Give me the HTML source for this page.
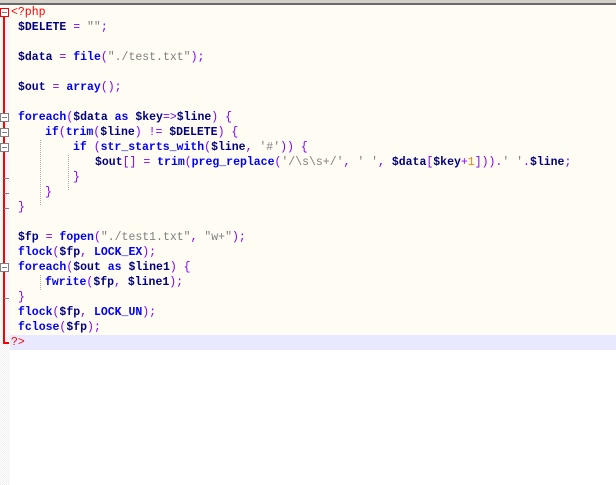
<!DOCTYPE html>
<html><head><meta charset="utf-8"><style>
*{margin:0;padding:0}
body{width:616px;height:485px;overflow:hidden;background:#fff;position:relative;font-family:"Liberation Mono",monospace;font-size:11.5px}
#top{position:absolute;left:0;top:0;width:616px;height:3px;background:#d4d0c8}
#top2{position:absolute;left:0;top:3px;width:616px;height:2px;background:#6a6a6a}
#gut{position:absolute;left:0;top:5px;width:10px;height:480px;background:repeating-conic-gradient(#f0f0f0 0 25%,#fff 0 50%) 0 0/2px 2px}
#code{position:absolute;left:10px;top:5px;width:606px;height:330px;background:#fffcf3}
#cur{position:absolute;left:10px;top:335px;width:606px;height:15px;background:#e8e8ff}
.l{position:absolute;height:15px;line-height:15px;white-space:pre;color:#000080;font-weight:bold}
.k{color:#0000ff}.o{color:#8000ff;font-weight:normal}.s{color:#808080;font-weight:normal}.n{color:#ff8000;font-weight:normal}.r{color:#ff0000;font-weight:normal}
.vl{position:absolute;width:3px;background:#f00;left:3px}
.bx{position:absolute;left:0;width:7px;height:7px;border:1px solid #808080;background:#fff}
.bx:after{content:"";position:absolute;left:1px;top:3px;width:5px;height:1px;background:#808080}
.tk{position:absolute;left:4px;width:5px;height:1px;background:#808080}
.ig{position:absolute;width:0;border-left:1px dotted #aaa}
</style></head><body>
<div id="top"></div><div id="top2"></div>
<div id="gut"></div><div id="code"></div><div id="cur"></div>
<div class="vl" style="top:13px;height:330px;width:2px"></div>
<div style="position:absolute;left:3px;top:342px;width:6px;height:2px;background:#f00"></div>
<div class="bx" style="top:8px;border-color:#f00"></div>
<div class="bx" style="top:113px"></div>
<div class="bx" style="top:128px"></div>
<div class="bx" style="top:143px"></div>
<div class="bx" style="top:263px"></div>
<div class="tk" style="top:178px"></div>
<div class="tk" style="top:193px"></div>
<div class="tk" style="top:208px"></div>
<div class="tk" style="top:298px"></div>
<div class="ig" style="left:40px;top:140px;height:65px"></div>
<div class="ig" style="left:68px;top:155px;height:35px"></div>
<div class="ig" style="left:40px;top:275px;height:15px"></div>

<div class="l r" style="left:11px;top:5px">&lt;?php</div>
<div class="l" style="left:18px;top:20px">$DELETE <span class="o">=</span> <span class="s">""</span><span class="o">;</span></div>
<div class="l" style="left:18px;top:50px">$data <span class="o">=</span> <span class="k">file</span><span class="o">(</span><span class="s">"./test.txt"</span><span class="o">);</span></div>
<div class="l" style="left:18px;top:80px">$out <span class="o">=</span> <span class="k">array</span><span class="o">();</span></div>
<div class="l" style="left:18px;top:110px"><span class="k">foreach</span><span class="o">(</span>$data <span class="k">as</span> $key<span class="o">=&gt;</span>$line<span class="o">)</span> <span class="o">{</span></div>
<div class="l" style="left:45px;top:125px"><span class="k">if</span><span class="o">(</span><span class="k">trim</span><span class="o">(</span>$line<span class="o">)</span> <span class="o">!=</span> $DELETE<span class="o">)</span> <span class="o">{</span></div>
<div class="l" style="left:73px;top:140px"><span class="k">if</span> <span class="o">(</span><span class="k">str_starts_with</span><span class="o">(</span>$line<span class="o">,</span> <span class="s">'#'</span><span class="o">))</span> <span class="o">{</span></div>
<div class="l" style="left:95px;top:155px">$out<span class="o">[]</span> <span class="o">=</span> <span class="k">trim</span><span class="o">(</span><span class="k">preg_replace</span><span class="o">(</span><span class="s">'/\s\s+/'</span><span class="o">,</span> <span class="s">' '</span><span class="o">,</span> $data<span class="o">[</span>$key<span class="o">+</span><span class="n">1</span><span class="o">])).</span><span class="s">' '</span><span class="o">.</span>$line<span class="o">;</span></div>
<div class="l" style="left:73px;top:170px"><span class="o">}</span></div>
<div class="l" style="left:45px;top:185px"><span class="o">}</span></div>
<div class="l" style="left:18px;top:200px"><span class="o">}</span></div>
<div class="l" style="left:18px;top:230px">$fp <span class="o">=</span> <span class="k">fopen</span><span class="o">(</span><span class="s">"./test1.txt"</span><span class="o">,</span> <span class="s">"w+"</span><span class="o">);</span></div>
<div class="l" style="left:18px;top:245px"><span class="k">flock</span><span class="o">(</span>$fp<span class="o">,</span> <span class="k" style="text-decoration:none">LOCK_EX</span><span class="o">);</span></div>
<div class="l" style="left:18px;top:260px"><span class="k">foreach</span><span class="o">(</span>$out <span class="k">as</span> $line1<span class="o">)</span> <span class="o">{</span></div>
<div class="l" style="left:45px;top:275px"><span class="k">fwrite</span><span class="o">(</span>$fp<span class="o">,</span> $line1<span class="o">);</span></div>
<div class="l" style="left:18px;top:290px"><span class="o">}</span></div>
<div class="l" style="left:18px;top:305px"><span class="k">flock</span><span class="o">(</span>$fp<span class="o">,</span> <span class="k">LOCK_UN</span><span class="o">);</span></div>
<div class="l" style="left:18px;top:320px"><span class="k">fclose</span><span class="o">(</span>$fp<span class="o">);</span></div>
<div class="l r" style="left:11px;top:335px">?&gt;</div>
</body></html>
